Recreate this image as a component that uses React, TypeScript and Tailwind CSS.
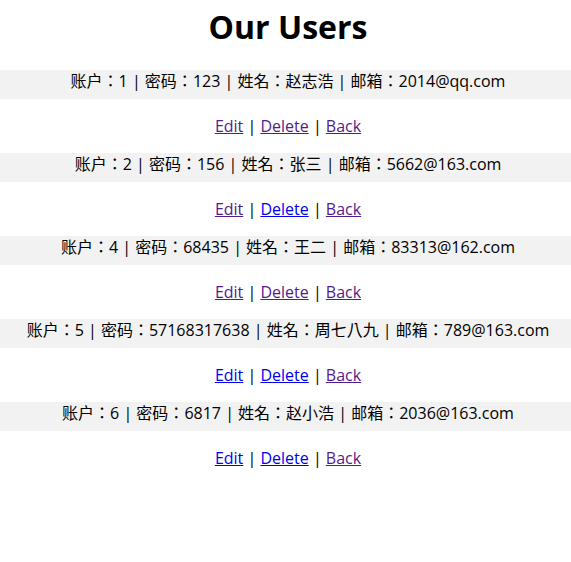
import React from "react";

const users = [
  { id: 1, pw: "123", name: "赵志浩", mail: "2014@qq.com", v: [true, true, true] },
  { id: 2, pw: "156", name: "张三", mail: "5662@163.com", v: [true, false, true] },
  { id: 4, pw: "68435", name: "王二", mail: "83313@162.com", v: [true, true, true] },
  { id: 5, pw: "57168317638", name: "周七八九", mail: "789@163.com", v: [false, false, true] },
  { id: 6, pw: "6817", name: "赵小浩", mail: "2036@163.com", v: [false, false, true] },
];

function L({ visited, children }: { visited: boolean; children: React.ReactNode }) {
  return (
    <a href="#" className={visited ? "underline text-[#551a8b]" : "underline text-[#0000ee]"}>
      {children}
    </a>
  );
}

export default function App() {
  return (
    <div className="w-[571px] h-[562px] bg-white text-black font-['Open_Sans','Noto_Sans_CJK_TC',sans-serif]">
      <h1 className="text-[32px] font-bold text-center leading-[40px] pt-[7px] pb-[23px] pl-[5px]">Our Users</h1>
      {users.map((u) => (
        <div key={u.id}>
          <div className="bg-[#f2f2f2] h-[29px] leading-[23px] text-center text-[16px] pl-[5px]">
            账户：{u.id} | 密码：{u.pw} | 姓名：{u.name} | 邮箱：{u.mail}
          </div>
          <p className="text-center text-[16px] leading-[22px] my-[16px] pl-[5px]">
            <L visited={u.v[0]}>Edit</L> | <L visited={u.v[1]}>Delete</L> | <L visited={u.v[2]}>Back</L>
          </p>
        </div>
      ))}
    </div>
  );
}
